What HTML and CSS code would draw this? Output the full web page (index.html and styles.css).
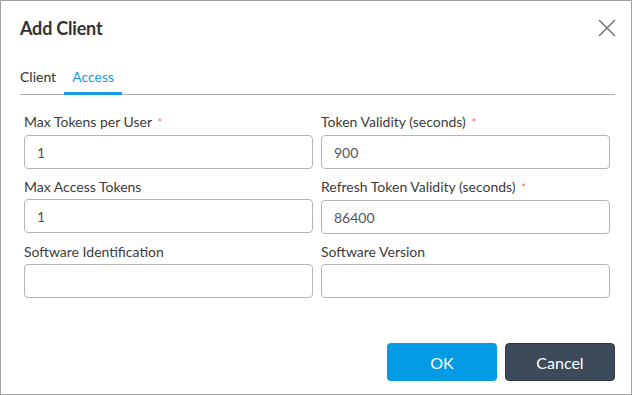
FILE: index.html
```html
<!DOCTYPE html>
<html lang="en">
  <head>
    <meta charset="UTF-8" />
    <meta name="viewport" content="width=device-width, initial-scale=1.0" />
    <title>Add Client</title>
    <link rel="stylesheet" href="styles.css">
  </head>
  <body>
    <div class="dialog">
      <div class="dialog-header">
        <h1>Add Client</h1>
        <button class="close" aria-label="Close">
          <svg width="18" height="18" viewBox="0 0 18 18">
            <path d="M1 1 L17 17 M17 1 L1 17" stroke="#777" stroke-width="1.6" fill="none" />
          </svg>
        </button>
      </div>
      <div class="tabs">
        <span class="tab">Client</span>
        <span class="tab active">Access</span>
      </div>
      <form class="form-grid">
        <div class="form-group">
          <label>Max Tokens per User <span class="req">*</span></label>
          <input type="text" value="1" />
        </div>
        <div class="form-group">
          <label>Token Validity (seconds) <span class="req">*</span></label>
          <input type="text" value="900" />
        </div>
        <div class="form-group">
          <label>Max Access Tokens</label>
          <input type="text" value="1" />
        </div>
        <div class="form-group">
          <label>Refresh Token Validity (seconds) <span class="req">*</span></label>
          <input type="text" value="86400" />
        </div>
        <div class="form-group">
          <label>Software Identification</label>
          <input type="text" value="" />
        </div>
        <div class="form-group">
          <label>Software Version</label>
          <input type="text" value="" />
        </div>
      </form>
      <div class="actions">
        <button class="btn btn-ok">OK</button>
        <button class="btn btn-cancel">Cancel</button>
      </div>
    </div>
  </body>
</html>
```

FILE: styles.css
```css
body {
  margin: 0;
  font-family: Lato, "Open Sans", sans-serif;
  background-color: white;
}
.dialog {
  width: 632px;
  height: 395px;
  box-sizing: border-box;
  border: 1px solid #a0a0a0;
  padding: 0 16px 0 19px;
  display: flex;
  flex-direction: column;
}
.dialog-header {
  display: flex;
  justify-content: space-between;
  align-items: center;
  height: 54px;
}
h1 {
  margin: 0;
  font-size: 18px;
  font-weight: bold;
  color: #333;
  letter-spacing: -0.2px;
}
.close {
  border: none;
  background: none;
  padding: 0;
  margin-right: -1px;
  width: 18px;
  height: 18px;
  cursor: pointer;
}
.tabs {
  display: flex;
  border-bottom: 1px solid #b0b0b0;
  margin-top: 10px;
}
.tab {
  font-size: 14px;
  color: #333;
  padding: 3px 8px 7px;
  border-bottom: 3px solid transparent;
  margin-bottom: -1px;
}
.tab:first-child {
  padding-left: 0;
}
.tab.active {
  color: #1a9be6;
  border-bottom-color: #1a9be6;
}
.form-grid {
  display: grid;
  grid-template-columns: 289px 289px;
  column-gap: 8px;
  row-gap: 10px;
  padding: 19px 0 0 4px;
}
.form-group label {
  display: block;
  font-size: 14px;
  color: #3c3c3c;
  margin-bottom: 4px;
  line-height: 16px;
}
.req {
  color: #ef6b7b;
  font-size: 11px;
  margin-left: 2px;
}
.form-group input {
  display: block;
  width: 100%;
  height: 34px;
  box-sizing: border-box;
  border: 1px solid #b5b5b5;
  border-radius: 4px;
  padding: 0 12px;
  font-family: inherit;
  font-size: 14px;
  color: #555;
}
.actions {
  display: flex;
  justify-content: flex-end;
  gap: 8px;
  margin-top: auto;
  margin-bottom: 13px;
}
.btn {
  width: 110px;
  height: 38px;
  border: none;
  border-radius: 4px;
  color: white;
  font-family: inherit;
  font-size: 16px;
  cursor: pointer;
}
.btn-ok {
  background-color: #039be5;
}
.btn-cancel {
  background-color: #3c4a5a;
  border: 1px solid #2f3b48;
}
```
